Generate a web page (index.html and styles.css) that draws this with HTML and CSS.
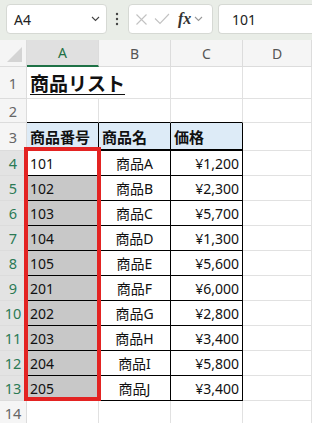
FILE: index.html
```html
<!DOCTYPE html>
<html lang="ja">
<head>
    <meta charset="UTF-8">
    <meta name="viewport" content="width=device-width, initial-scale=1.0">
    <title>商品リスト</title>
    <link rel="stylesheet" href="styles.css">
</head>
<body>
    <div id="app">
        <!-- Formula bar -->
        <div class="toolbar">
            <div class="namebox">
                <span>A4</span>
                <svg class="chev" width="9" height="6" viewBox="0 0 9 6"><path d="M1 1l3.5 3.5L8 1" fill="none" stroke="#444" stroke-width="1.1"/></svg>
            </div>
            <svg class="more" width="4" height="14" viewBox="0 0 4 14"><circle cx="2" cy="2" r="1.2" fill="#444"/><circle cx="2" cy="7" r="1.2" fill="#444"/><circle cx="2" cy="12" r="1.2" fill="#444"/></svg>
            <div class="fxbox">
                <svg width="13" height="13" viewBox="0 0 13 13"><path d="M1.5 1.5l10 10M11.5 1.5l-10 10" stroke="#c2c2c2" stroke-width="1.1"/></svg>
                <svg width="16" height="12" viewBox="0 0 16 12"><path d="M1 5.5l5 5L15 1" fill="none" stroke="#c2c2c2" stroke-width="1.1"/></svg>
                <span class="fx">fx</span>
                <svg width="9" height="6" viewBox="0 0 9 6"><path d="M1 1l3.5 3.5L8 1" fill="none" stroke="#999" stroke-width="1.1"/></svg>
            </div>
            <div class="formula">101</div>
        </div>

        <!-- Sheet -->
        <div class="sheet">
            <div class="cell ch corner"><span class="tri"></span></div>
            <div class="cell ch sel">A</div>
            <div class="cell ch">B</div>
            <div class="cell ch">C</div>
            <div class="cell ch">D</div>

            <div class="cell rh">1</div>
            <div class="cell title"><span>商品リスト</span></div>
            <div class="cell"></div>
            <div class="cell"></div>
            <div class="cell"></div>

            <div class="cell rh">2</div>
            <div class="cell above"></div>
            <div class="cell above"></div>
            <div class="cell above"></div>
            <div class="cell"></div>

            <div class="cell rh">3</div>
            <div class="cell t head">商品番号</div>
            <div class="cell t head">商品名</div>
            <div class="cell t head">価格</div>
            <div class="cell"></div>

            <div class="cell rh on">4</div>
            <div class="cell t id">101</div>
            <div class="cell t name">商品A</div>
            <div class="cell t price">¥1,200</div>
            <div class="cell"></div>

            <div class="cell rh on">5</div>
            <div class="cell t id gray">102</div>
            <div class="cell t name">商品B</div>
            <div class="cell t price">¥2,300</div>
            <div class="cell"></div>

            <div class="cell rh on">6</div>
            <div class="cell t id gray">103</div>
            <div class="cell t name">商品C</div>
            <div class="cell t price">¥5,700</div>
            <div class="cell"></div>

            <div class="cell rh on">7</div>
            <div class="cell t id gray">104</div>
            <div class="cell t name">商品D</div>
            <div class="cell t price">¥1,300</div>
            <div class="cell"></div>

            <div class="cell rh on">8</div>
            <div class="cell t id gray">105</div>
            <div class="cell t name">商品E</div>
            <div class="cell t price">¥5,600</div>
            <div class="cell"></div>

            <div class="cell rh on">9</div>
            <div class="cell t id gray">201</div>
            <div class="cell t name">商品F</div>
            <div class="cell t price">¥6,000</div>
            <div class="cell"></div>

            <div class="cell rh on">10</div>
            <div class="cell t id gray">202</div>
            <div class="cell t name">商品G</div>
            <div class="cell t price">¥2,800</div>
            <div class="cell"></div>

            <div class="cell rh on">11</div>
            <div class="cell t id gray">203</div>
            <div class="cell t name">商品H</div>
            <div class="cell t price">¥3,400</div>
            <div class="cell"></div>

            <div class="cell rh on">12</div>
            <div class="cell t id gray">204</div>
            <div class="cell t name">商品I</div>
            <div class="cell t price">¥5,800</div>
            <div class="cell"></div>

            <div class="cell rh on">13</div>
            <div class="cell t id gray">205</div>
            <div class="cell t name">商品J</div>
            <div class="cell t price">¥3,400</div>
            <div class="cell"></div>

            <div class="cell rh">14</div>
            <div class="cell"></div>
            <div class="cell"></div>
            <div class="cell"></div>
            <div class="cell"></div>
        </div>

        <!-- red annotation box over column A -->
        <div class="redbox"></div>
    </div>
</body>
</html>
```

FILE: styles.css
```css
* {
    margin: 0;
    padding: 0;
    box-sizing: border-box;
}

body {
    font-family: 'Noto Sans', 'Noto Sans CJK JP', sans-serif;
    background: #ffffff;
    color: #111111;
    overflow: hidden;
}

#app {
    position: relative;
    width: 312px;
    height: 423px;
    overflow: hidden;
}

/* formula bar */
.toolbar {
    height: 40px;
    background: #e9ede7;
    display: flex;
    align-items: center;
    padding: 0 0 2px 6px;
}

.namebox {
    width: 101px;
    height: 30px;
    background: #ffffff;
    border: 1px solid #d6d9d4;
    border-radius: 4px;
    display: flex;
    align-items: center;
    justify-content: space-between;
    padding: 0 6px 0 7px;
    font-size: 14px;
    color: #222;
}

.more {
    margin: 0 9px 0 8px;
}

.fxbox {
    width: 85px;
    height: 30px;
    background: #ffffff;
    border: 1px solid #d6d9d4;
    border-radius: 4px;
    display: flex;
    align-items: center;
    gap: 6px;
    padding: 0 2px 0 6px;
}

.fx {
    font-family: 'Liberation Serif', serif;
    font-style: italic;
    font-weight: bold;
    font-size: 16px;
    color: #333;
    margin-left: 2px;
    margin-right: -3px;
}

.formula {
    flex: 1;
    height: 30px;
    margin-left: 5px;
    background: #ffffff;
    border: 1px solid #d6d9d4;
    border-right: none;
    border-radius: 4px 0 0 4px;
    display: flex;
    align-items: center;
    padding-left: 13px;
    font-size: 14px;
    color: #222;
}

/* sheet grid */
.sheet {
    display: grid;
    grid-template-columns: 27px 72px 72px 72px 1fr;
    grid-template-rows: 27px 32px 24px 28px repeat(11, 25px);
    font-size: 14px;
}

.cell {
    border-right: 1px solid #e1e1e1;
    border-bottom: 1px solid #e1e1e1;
    display: flex;
    align-items: center;
    white-space: nowrap;
    overflow: hidden;
}

.ch {
    background: #f5f5f5;
    color: #555;
    justify-content: center;
    border-color: #dcdcdc;
}

.ch.sel {
    background: #e0e0e0;
    color: #1e7145;
    border-bottom: 2px solid #1e7145;
}

.corner {
    justify-content: flex-end;
    align-items: flex-end;
    padding: 0 4px 4px 0;
}

.tri {
    width: 15px;
    height: 15px;
    background: #d4d4d4;
    clip-path: polygon(100% 0, 100% 100%, 0 100%);
}

.rh {
    background: #f5f5f5;
    color: #666;
    justify-content: center;
    border-color: #dcdcdc;
    font-size: 14.5px;
}

.rh.on {
    background: #e3e3e3;
    color: #2b7a55;
}

.title {
    padding-left: 3px;
    overflow: visible;
    font-size: 19px;
    font-weight: bold;
    border-right: none;
}

.title span {
    text-decoration: underline;
    text-underline-offset: 3px;
}

.above {
    border-bottom-color: #000;
}

.t {
    border-right-color: #000;
    border-bottom-color: #000;
}

.head {
    background: #ddebf7;
    font-weight: bold;
    font-size: 15px;
    padding-left: 3px;
    border-bottom-width: 2px;
}

.id {
    padding-left: 3px;
}

.id.gray {
    background: #c8c8c8;
}

.name {
    justify-content: center;
}

.price {
    justify-content: flex-end;
    padding-right: 3px;
}

/* red annotation */
.redbox {
    position: absolute;
    left: 24px;
    top: 147px;
    width: 77px;
    height: 254px;
    border: 4px solid #e32322;
}
```
